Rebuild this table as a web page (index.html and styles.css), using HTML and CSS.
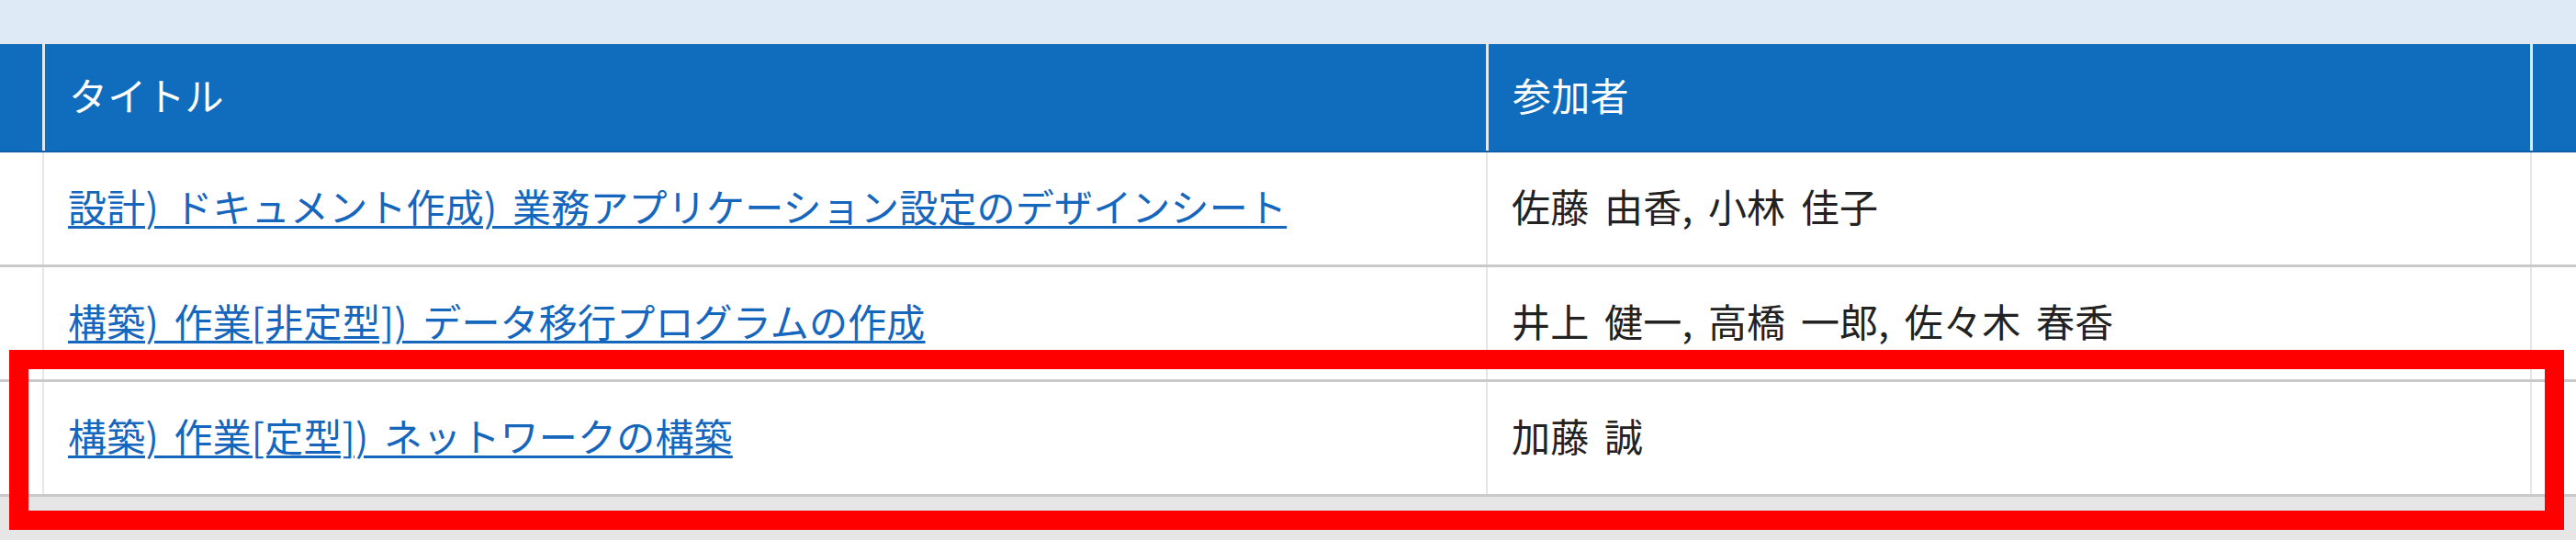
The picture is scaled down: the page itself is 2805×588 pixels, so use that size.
FILE: index.html
```html
<!DOCTYPE html>
<html lang="ja">
<head>
<meta charset="utf-8">
<title>一覧</title>
<link rel="stylesheet" href="styles.css">
</head>
<body>
<div class="page">
  <div class="toolbar"></div>
  <div class="table">
    <div class="row head">
      <div class="cell edge"></div>
      <div class="cell">タイトル</div>
      <div class="cell">参加者</div>
      <div class="cell edge"></div>
    </div>
    <div class="row">
      <div class="cell edge"></div>
      <div class="cell"><a href="#">設計) ドキュメント作成) 業務アプリケーション設定のデザインシート</a></div>
      <div class="cell">佐藤 由香, 小林 佳子</div>
      <div class="cell edge"></div>
    </div>
    <div class="row">
      <div class="cell edge"></div>
      <div class="cell"><a href="#">構築) 作業[非定型]) データ移行プログラムの作成</a></div>
      <div class="cell">井上 健一, 高橋 一郎, 佐々木 春香</div>
      <div class="cell edge"></div>
    </div>
    <div class="row">
      <div class="cell edge"></div>
      <div class="cell"><a href="#">構築) 作業[定型]) ネットワークの構築</a></div>
      <div class="cell">加藤 誠</div>
      <div class="cell edge"></div>
    </div>
  </div>
  <div class="highlight"></div>
</div>
</body>
</html>
```
FILE: styles.css
```css
html, body {
  margin: 0;
  padding: 0;
}
body {
  background: #e6e6e6;
  font-family: "Noto Sans CJK JP", "Noto Sans", sans-serif;
  color: #222;
}
.page {
  position: relative;
  width: 2805px;
  height: 588px;
  overflow: hidden;
}
.toolbar {
  height: 46px;
  background: #deebf7;
  border-bottom: 2px solid #e4e8ec;
}
.table {
  display: flex;
  flex-direction: column;
}
.row {
  display: grid;
  grid-template-columns: 46px 1572px 1137px 1fr;
  height: 125px;
  background: #fff;
  border-bottom: 3px solid #c9c9c9;
  box-sizing: border-box;
}
.row.head {
  height: 118px;
  background: #106cbc;
  border-bottom: 2px solid #0c5fa8;
  color: #fff;
}
.cell {
  display: flex;
  align-items: center;
  padding-left: 26px;
  font-size: 42px;
  line-height: 1;
  word-spacing: 7px;
  letter-spacing: 0.2px;
  white-space: nowrap;
  padding-bottom: 6px;
  box-sizing: border-box;
}
.cell + .cell {
  border-left: 2px solid #e6e6e6;
}
.head .cell + .cell {
  border-left: 3px solid #e2e8ef;
}
.cell.edge {
  padding: 0;
}
.cell a {
  color: #1566bd;
  text-decoration: underline;
  text-decoration-thickness: 3px;
  text-underline-offset: 4px;
}
.highlight {
  position: absolute;
  left: 10px;
  top: 381px;
  width: 2782px;
  height: 196px;
  border: 21px solid #ff0000;
  box-sizing: border-box;
}
```
